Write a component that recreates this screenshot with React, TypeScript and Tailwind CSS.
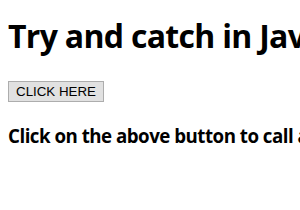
export default function App() {
  return (
    <div className="w-[300px] h-[210px] overflow-hidden bg-white px-2 text-black">
      <h1 className="pt-[20px] text-[32px] leading-[32px] font-bold tracking-[-0.7px] whitespace-nowrap font-['Open_Sans',sans-serif]">
        Try and catch in JavaScript
      </h1>
      <button className="mt-[29px] block h-[21px] w-[96px] border border-[#adadad] bg-[#e1e1e1] text-[13.33px] leading-none text-black font-['Liberation_Sans',Arial,sans-serif]">
        CLICK HERE
      </button>
      <h3 className="mt-[24px] text-[18.72px] leading-[19px] font-bold tracking-[-0.5px] whitespace-nowrap font-['Open_Sans',sans-serif]">
        Click on the above button to call a function
      </h3>
    </div>
  )
}
